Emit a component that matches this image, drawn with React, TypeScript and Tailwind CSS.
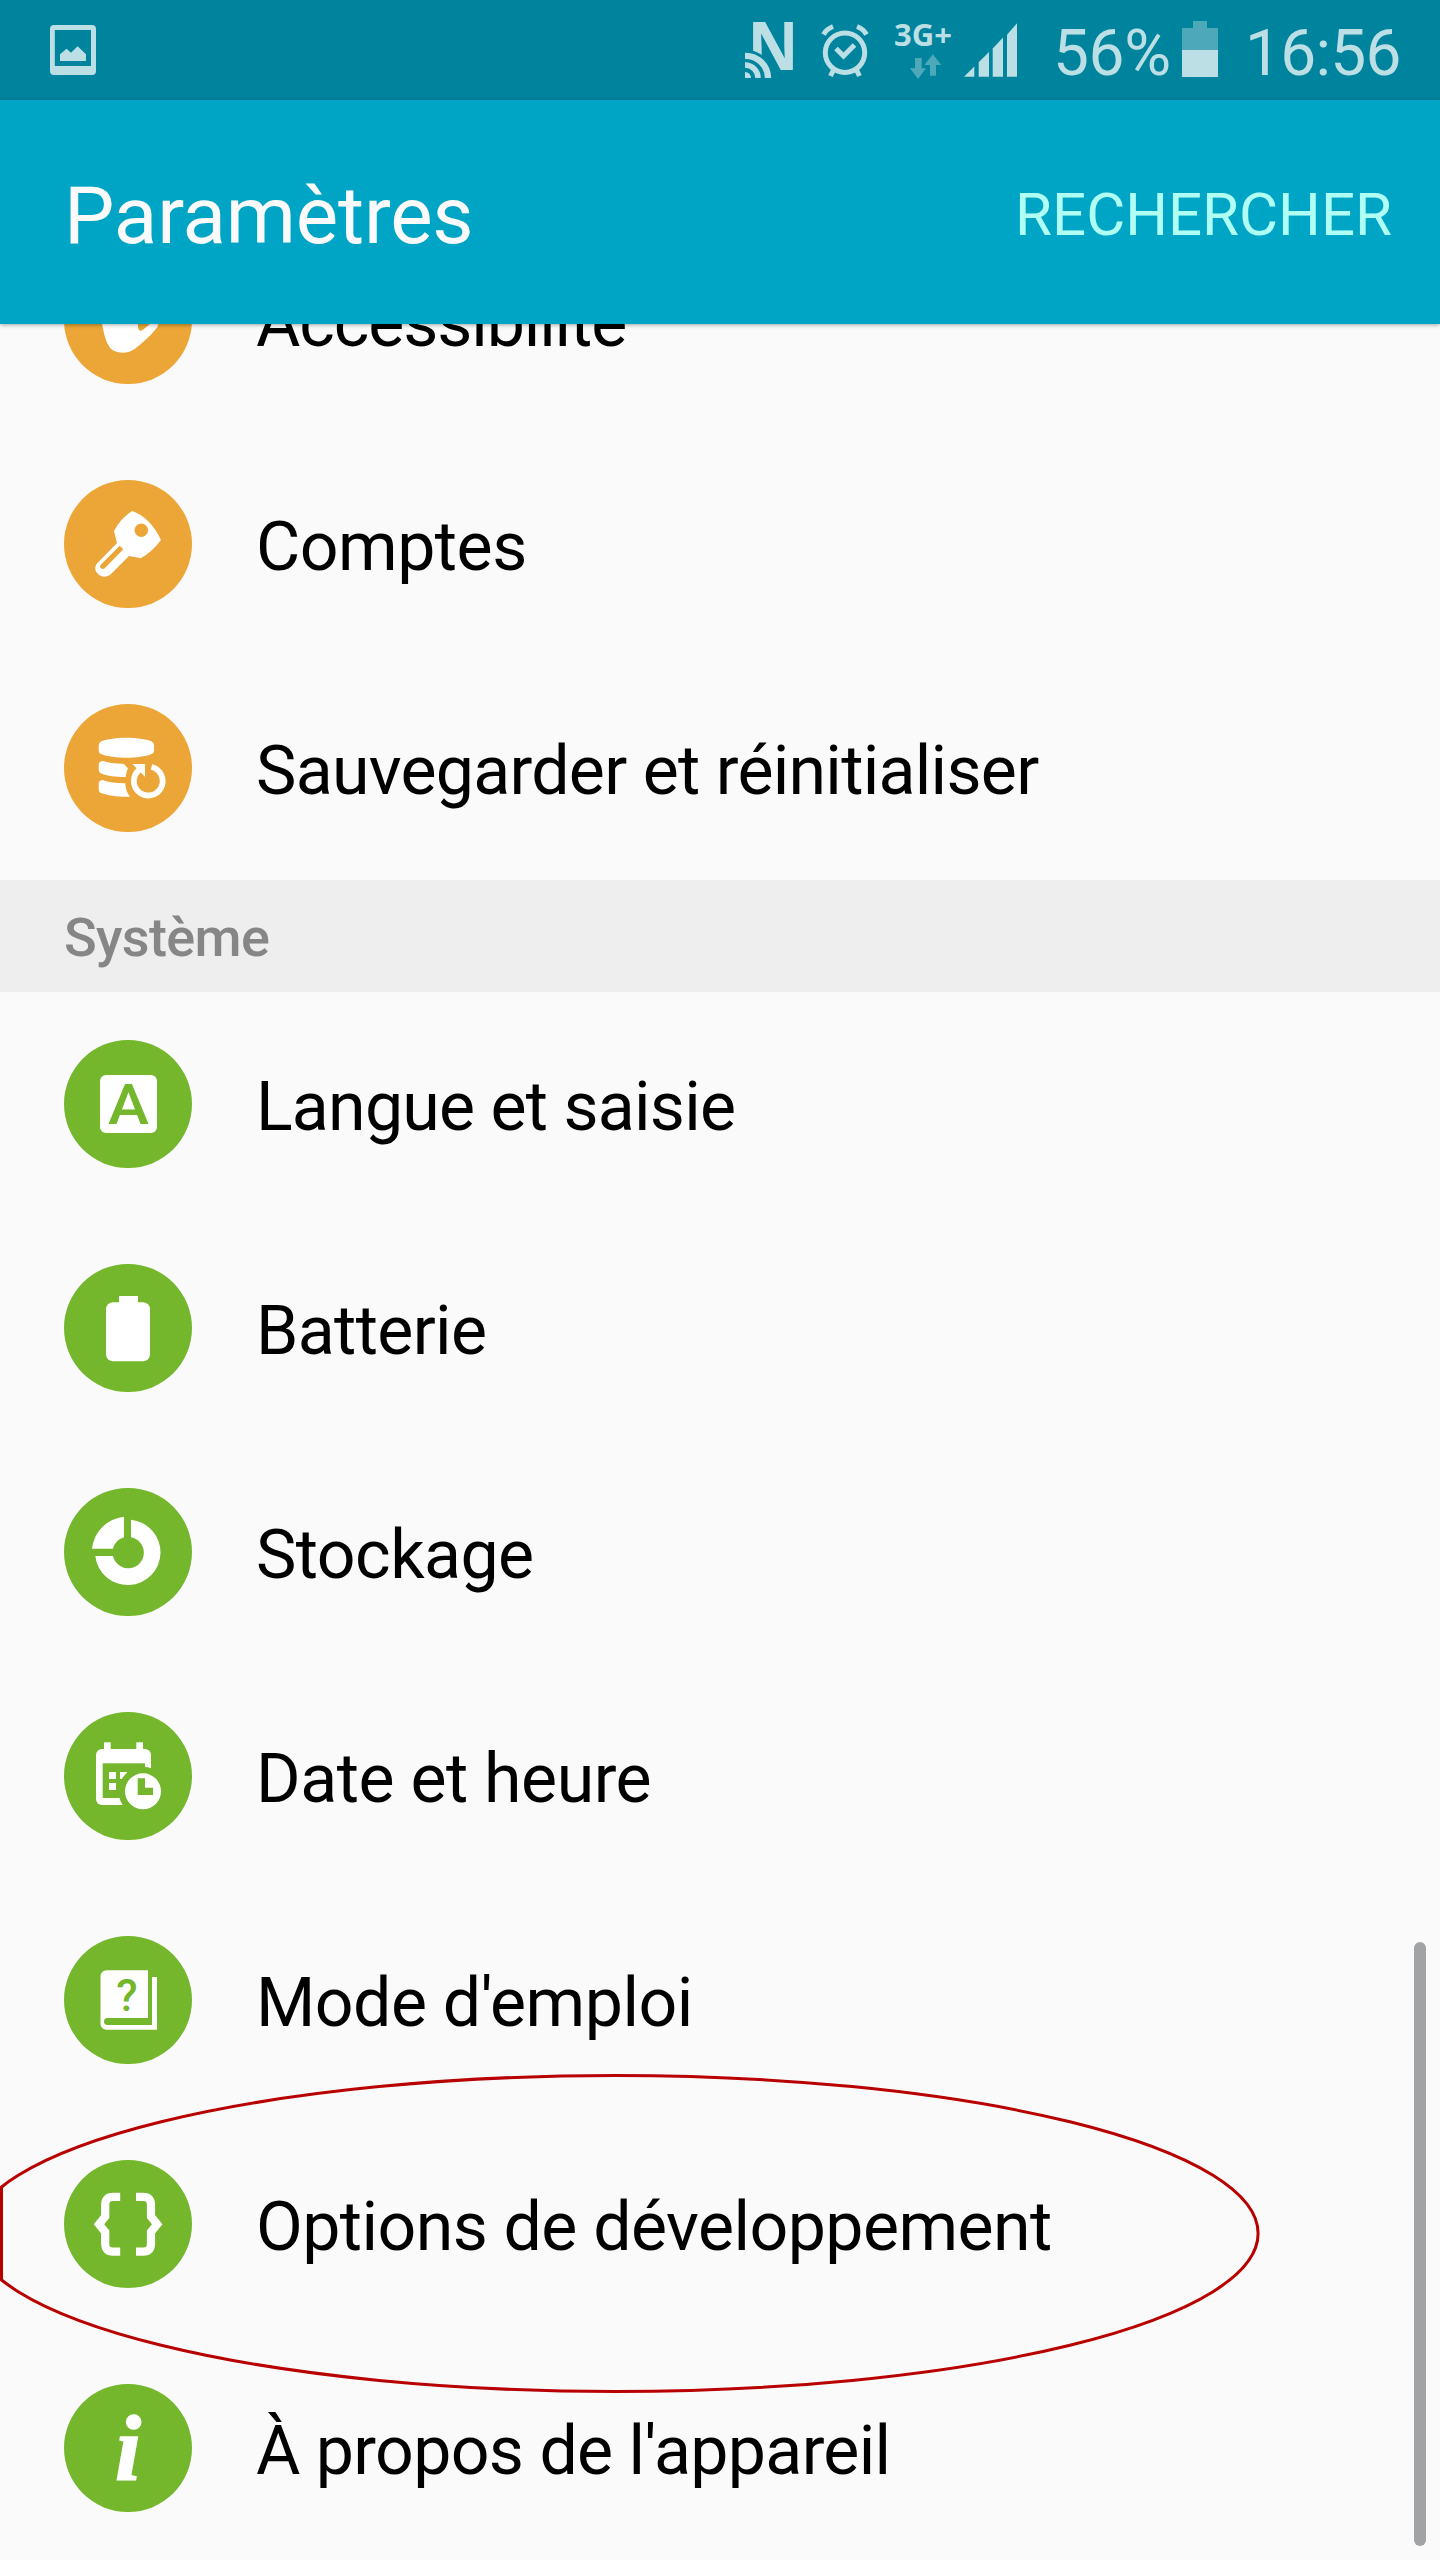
import React from 'react';

const ORANGE = '#eba637';
const GREEN = '#74b72c';

type Item = {
  label: string;
  tracking: string;
  icon: React.ReactNode;
};

const personalItems: Item[] = [
  {
    label: 'Accessibilité',
    tracking: 'tracking-[-1.1px]',
    icon: (
      <>
        <path d="M34 50 L38 68 C40 77 41 83 44.300 89 C47 95 53 96.700 59.300 96.700 C65 96.700 69 94.500 72.700 91.300 C80 86 88 78 93.300 71.300 L95 66 L95 50 Z" fill="#fff" />
        <path d="M74 60 V72 Q75 76 78.700 74 L86 68 L90 60 Z" fill={ORANGE} />
      </>
    ),
  },
  {
    label: 'Comptes',
    tracking: 'tracking-[-0.5px]',
    icon: (
      <>
        <path d="M68 31 Q86 37 97 60 Q88 72 76.700 78.300 L65 76 L46 95 Q40 98.500 35 95 Q29 90 32.500 84 L53 63 L50 51 Q56 39 68 31 Z" fill="#fff" />
        <circle cx="77.300" cy="50.300" r="6.700" fill={ORANGE} />
        <path d="M55.700 65.700 L59.300 69.300 L41 88 Q38 90 36.300 87.500 Q35.500 86 37 84.500 Z" fill={ORANGE} />
      </>
    ),
  },
  {
    label: 'Sauvegarder et réinitialiser',
    tracking: 'tracking-[-0.72px]',
    icon: (
      <>
        <path d="M34.700 41 Q34.700 38.500 37 37.500 C50 32.500 75 32.500 87.700 37.500 Q90 38.500 90 41 V46.500 Q90 49 87.700 50 C75 55 50 55 37 50 Q34.700 49 34.700 46.500 Z" fill="#fff" />
        <path d="M34.700 60.500 Q35 57 39.300 57 Q48 60 59.500 59.700 L64 64.300 Q62 68 61.700 73 C52 73 43 72 37 69.500 Q34.700 68.500 34.700 66 Z" fill="#fff" />
        <path d="M34.700 79.500 Q35 76 38.500 76 Q48 79.300 61.300 79.200 Q61.500 87 66 92.700 C54 93 44 91.500 37 89 Q34.700 88 34.700 85.500 Z" fill="#fff" />
        <path d="M87.500 63 A14.400 14.400 0 1 1 75 66" fill="none" stroke="#fff" strokeWidth="5.800" />
        <path d="M68.300 60 H81 V72.700 Z" fill="#fff" />
      </>
    ),
  },
];

const systemItems: Item[] = [
  {
    label: 'Langue et saisie',
    tracking: 'tracking-[-0.75px]',
    icon: (
      <>
        <rect x="36" y="35" width="57" height="58" rx="6" fill="#fff" />
        <text x="64.400" y="83.700" textAnchor="middle" fontSize="56" fontWeight="500" textLength="41" lengthAdjust="spacingAndGlyphs" fill={GREEN}>
          A
        </text>
      </>
    ),
  },
  {
    label: 'Batterie',
    tracking: 'tracking-[-0.65px]',
    icon: (
      <>
        <rect x="42" y="38.300" width="44" height="59" rx="7" fill="#fff" />
        <rect x="55" y="32" width="19" height="12" fill="#fff" />
      </>
    ),
  },
  {
    label: 'Stockage',
    tracking: 'tracking-[-0.55px]',
    icon: (
      <>
        <path d="M67 31.800 A32.700 32.700 0 1 1 31.300 68 H49 A15.600 15.600 0 1 0 67 49.300 Z" fill="#fff" />
        <path d="M60 28.700 A36 36 0 0 0 28 60.700 H49 A15.600 15.600 0 0 1 60 49.300 Z" fill="#fff" />
      </>
    ),
  },
  {
    label: 'Date et heure',
    tracking: 'tracking-[-0.48px]',
    icon: (
      <>
        <rect x="32" y="37" width="55" height="56" rx="6" fill="#fff" />
        <rect x="40" y="30.300" width="6.700" height="9" fill="#fff" />
        <rect x="72.300" y="30.300" width="6.700" height="9" fill="#fff" />
        <rect x="38.700" y="51.300" width="42.300" height="34.700" fill={GREEN} />
        <rect x="45" y="60" width="7" height="7" fill="#fff" />
        <rect x="56" y="60" width="7" height="7" fill="#fff" />
        <rect x="45" y="71" width="7" height="7" fill="#fff" />
        <circle cx="79" cy="79.300" r="24.500" fill={GREEN} />
        <circle cx="79" cy="79.300" r="18" fill="#fff" />
        <path d="M73.700 66.300 H81 V75.700 H89 V83 H73.700 Z" fill={GREEN} />
      </>
    ),
  },
  {
    label: "Mode d'emploi",
    tracking: 'tracking-[-0.52px]',
    icon: (
      <>
        <path d="M42.500 34.300 H84 V82 H43.500 a3.500 3.500 0 0 0 0 7 H88 V41 H93 V93.700 H42.500 a6 6 0 0 1 -6 -6 V40.300 a6 6 0 0 1 6 -6 Z" fill="#fff" />
        <text x="63" y="75" textAnchor="middle" fontSize="44" fontWeight="500" fill={GREEN}>
          ?
        </text>
      </>
    ),
  },
  {
    label: 'Options de développement',
    tracking: 'tracking-[-0.56px]',
    icon: (
      <g fill="none" stroke="#fff" strokeWidth="8.200">
        <path d="M56.200 36.800 H49 Q41.200 36.800 41.200 45 V56.500 L35 64.200 L41.200 72 V83.500 Q41.200 91.600 49 91.600 H56.200" />
        <path d="M72 36.800 H79.200 Q87 36.800 87 45 V56.500 L93.200 64.200 L87 72 V83.500 Q87 91.600 79.200 91.600 H72" />
      </g>
    ),
  },
  {
    label: "À propos de l'appareil",
    tracking: 'tracking-[-0.68px]',
    icon: (
      <text x="64" y="96" textAnchor="middle" fontFamily="Liberation Serif, serif" fontStyle="italic" fontWeight="700" fontSize="94" fill="#fff" stroke="#fff" strokeWidth="1.500">
        i
      </text>
    ),
  },
];

const SettingsRow: React.FC<{ item: Item; color: string }> = ({ item, color }) => (
  <li className="flex h-56 items-center pl-16">
    <svg className="size-32 shrink-0" viewBox="0 0 128 128">
      <circle cx="64" cy="64" r="64" fill={color} />
      {item.icon}
    </svg>
    <span className={`ml-16 pt-[5px] text-[68px] leading-none whitespace-nowrap text-black ${item.tracking}`}>
      {item.label}
    </span>
  </li>
);

const StatusBar: React.FC = () => (
  <div className="flex h-[100px] items-center bg-[#00839d] text-[#bcdfe5]">
    <svg className="ml-[50px] h-[50px] w-[46px]" viewBox="0 0 46 50" fill="currentColor">
      <path fillRule="evenodd" d="M4 0 H42 a4 4 0 0 1 4 4 V46 a4 4 0 0 1 -4 4 H4 a4 4 0 0 1 -4 -4 V4 a4 4 0 0 1 4 -4 Z M4.800 5 V41 H41 V5 Z" />
      <path d="M10 36 V29.300 L16.600 23.700 L21 27.700 L27.600 21.300 L36 29.300 V36 Z" />
    </svg>

    {/* NFC */}
    <svg className="ml-auto h-[100px] w-[52px]" viewBox="0 0 52 100">
      <text x="2.500" y="70" fontFamily="Open Sans" fontWeight="700" fontSize="66" textLength="51" lengthAdjust="spacingAndGlyphs" fill="currentColor">
        N
      </text>
      <circle cx="0" cy="78" r="28.500" fill="#00839d" />
      <g fill="none" stroke="currentColor">
        <path d="M0 55.800 A22.500 22.500 0 0 1 23 78" strokeWidth="6.300" />
        <path d="M0 65 A13 13 0 0 1 13 78" strokeWidth="5.500" />
      </g>
      <path d="M0 72 A6 6 0 0 1 6 78 H0 Z" fill="currentColor" />
    </svg>

    {/* Alarm */}
    <svg className="ml-6 h-[100px] w-12" viewBox="0 0 48 100" fill="none" stroke="currentColor" strokeWidth="5">
      <circle cx="24" cy="52.700" r="19.700" />
      <path d="M15 48.500 L22.500 56 L33.500 45" />
      <path d="M2.500 34.500 Q5.500 29 12 26.500" />
      <path d="M45.500 34.500 Q42.500 29 36 26.500" />
      <path d="M13 69 L9.500 76 M35 69 L38.500 76" />
    </svg>

    {/* Mobile network */}
    <svg className="ml-[25px] h-[100px] w-[58px]" viewBox="0 0 58 100">
      <text x="0" y="46" fontFamily="Open Sans" fontWeight="700" fontSize="31" fill="currentColor">
        3G+
      </text>
      <path d="M21 58 H27.700 V68.300 H32 L24 79 L16 68.300 H21 Z" fill="#4da8ba" />
      <path d="M36 75.700 H42 V65 H47.300 L38.800 54.300 L30.300 65 H36 Z" fill="#4da8ba" />
    </svg>
    <svg className="ml-3 h-[100px] w-[53px]" viewBox="0 0 53 100" fill="currentColor">
      <path d="M0 76.700 L10.300 66.500 V76.700 Z" />
      <path d="M14.700 76.700 V62.300 L25 52 V76.700 Z" />
      <path d="M28.700 76.700 V48.500 L39 37.500 V76.700 Z" />
      <path d="M43 76.700 V34.700 L53 23.300 V76.700 Z" />
    </svg>

    <span className="ml-9 w-[117px] pt-[7px] text-[64px] leading-none tracking-[-0.4px]">56%</span>
    <svg className="ml-3 h-[100px] w-9" viewBox="0 0 36 100">
      <path d="M11 21 H25 V28 H36 V50 H0 V28 H11 Z" fill="#4da8ba" />
      <rect y="50" width="36" height="27" fill="currentColor" />
    </svg>
    <span className="mr-10 ml-[27px] w-[155px] pt-[7px] text-[64px] leading-none tracking-[-0.7px]">16:56</span>
  </div>
);

export default function App() {
  return (
    <div className="relative flex h-[2560px] w-[1440px] flex-col overflow-hidden bg-[#fafafa] font-['Roboto',sans-serif]">
      <StatusBar />

      <header className="z-10 flex h-56 shrink-0 items-center justify-between bg-[#00a5c5] pr-12 pl-16 shadow-[0_1px_4px_rgba(0,0,0,0.35)]">
        <h1 className="pt-[7px] text-[80px] leading-none tracking-[-0.2px] text-[#fafafa]">Paramètres</h1>
        <button className="pt-[5px] text-[60px] leading-none text-[#b0fff5]">RECHERCHER</button>
      </header>

      <main className="min-h-0 flex-1 overflow-hidden">
        {/* the list is scrolled, so the first row starts under the header */}
        <ul className="-mt-[116px]">
          {personalItems.map((item) => (
            <SettingsRow key={item.label} item={item} color={ORANGE} />
          ))}
        </ul>
        <h2 className="flex h-28 items-center bg-[#eeeeee] pt-1 pl-16 text-[54px] leading-none font-medium tracking-[-0.65px] text-[#868686]">
          Système
        </h2>
        <ul>
          {systemItems.map((item) => (
            <SettingsRow key={item.label} item={item} color={GREEN} />
          ))}
        </ul>
      </main>

      {/* Scrollbar thumb */}
      <div className="absolute top-[1942px] right-[14px] h-[604px] w-3 rounded-full bg-[#a2a3a5]" />

      {/* Hand-drawn highlight */}
      <svg className="absolute top-[2070px] left-0 h-[328px] w-[1264px]" viewBox="0 2070 1264 328" fill="none" stroke="#b80000" strokeWidth="3">
        <ellipse cx="615.600" cy="2233.500" rx="642.500" ry="158" />
        <path d="M1.500 2187 V2280" />
      </svg>
    </div>
  );
}
